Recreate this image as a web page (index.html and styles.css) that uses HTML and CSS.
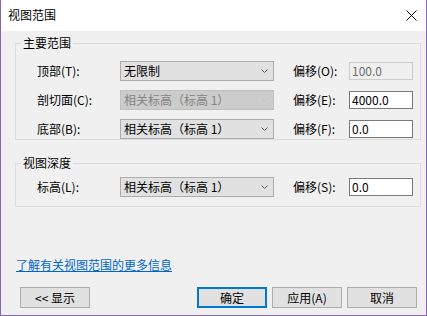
FILE: index.html
```html
<!DOCTYPE html>
<html lang="zh-CN">
<head>
<meta charset="utf-8">
<title>视图范围</title>
<link rel="stylesheet" href="styles.css">
</head>
<body>
<div class="window">
  <header class="titlebar">
    <span class="title">视图范围</span>
    <svg class="close" width="11" height="11" viewBox="0 0 11 11"><path d="M0.5 0.5 L10.5 10.5 M10.5 0.5 L0.5 10.5" stroke="#000" stroke-width="1" fill="none"/></svg>
  </header>
  <main class="content">
    <fieldset class="group group-main">
      <legend>主要范围</legend>
      <div class="rows">
        <span class="label">顶部(T):</span>
        <div class="combo"><span>无限制</span><svg class="arrow" width="7" height="4" viewBox="0 0 7 4"><polyline points="0.5,0.5 3.5,3.5 6.5,0.5" fill="none" stroke="#606060" stroke-width="1"/></svg></div>
        <span class="label offset">偏移(O):</span>
        <div class="field disabled">100.0</div>

        <span class="label">剖切面(C):</span>
        <div class="combo disabled"><span>相关标高（标高 1）</span><svg class="arrow" width="7" height="4" viewBox="0 0 7 4"><polyline points="0.5,0.5 3.5,3.5 6.5,0.5" fill="none" stroke="#bfbfbf" stroke-width="1"/></svg></div>
        <span class="label offset">偏移(E):</span>
        <div class="field">4000.0</div>

        <span class="label">底部(B):</span>
        <div class="combo"><span>相关标高（标高 1）</span><svg class="arrow" width="7" height="4" viewBox="0 0 7 4"><polyline points="0.5,0.5 3.5,3.5 6.5,0.5" fill="none" stroke="#606060" stroke-width="1"/></svg></div>
        <span class="label offset">偏移(F):</span>
        <div class="field">0.0</div>
      </div>
    </fieldset>

    <fieldset class="group group-depth">
      <legend>视图深度</legend>
      <div class="rows">
        <span class="label">标高(L):</span>
        <div class="combo"><span>相关标高（标高 1）</span><svg class="arrow" width="7" height="4" viewBox="0 0 7 4"><polyline points="0.5,0.5 3.5,3.5 6.5,0.5" fill="none" stroke="#606060" stroke-width="1"/></svg></div>
        <span class="label offset">偏移(S):</span>
        <div class="field">0.0</div>
      </div>
    </fieldset>

    <a class="more" href="#">了解有关视图范围的更多信息</a>

    <div class="buttons">
      <button class="btn btn-show">&lt;&lt; 显示</button>
      <button class="btn btn-default">确定</button>
      <button class="btn">应用(A)</button>
      <button class="btn">取消</button>
    </div>
  </main>
</div>
</body>
</html>
```

FILE: styles.css
```css
html, body {
  margin: 0;
  padding: 0;
}

body {
  width: 427px;
  height: 316px;
  overflow: hidden;
  font-family: "Noto Sans CJK SC", "Noto Sans", sans-serif;
  font-size: 12px;
  color: #000;
  background: #f0f0f0;
}

.window {
  box-sizing: border-box;
  width: 427px;
  height: 316px;
  border: 1px solid #8764b8;
  border-top: none;
  background: #f0f0f0;
  display: flex;
  flex-direction: column;
}

.titlebar {
  box-sizing: border-box;
  height: 31px;
  background: #fff;
  display: flex;
  align-items: center;
  justify-content: space-between;
  padding: 0 9px 0 7px;
  flex: none;
}

.title {
  font-size: 12px;
  line-height: 16px;
  margin-top: -1px;
}

.close {
  display: block;
}

.content {
  display: flex;
  flex-direction: column;
  flex: 1;
}

.group {
  box-sizing: border-box;
  width: 406px;
  min-width: 0;
  margin: 4px 0 0 14px;
  border: 1px solid #dcdcdc;
  padding: 10px 0 0 21px;
}

.group legend {
  margin-left: -16px;
  padding: 0 2px;
  line-height: 16px;
  font-size: 12px;
}

.group-depth {
  margin-top: 15px;
  padding-top: 6px;
  padding-bottom: 9px;
}

.rows {
  display: grid;
  grid-template-columns: 83px 154px 75px 64px;
  grid-auto-rows: 20px;
  row-gap: 9px;
  align-items: center;
}

.label {
  line-height: 16px;
  white-space: nowrap;
}

.offset {
  padding-left: 19px;
}

.combo {
  box-sizing: border-box;
  height: 20px;
  border: 1px solid #adadad;
  background: #e1e1e1;
  display: flex;
  align-items: center;
  justify-content: space-between;
  padding: 0 5px 0 3px;
  white-space: nowrap;
  line-height: 16px;
}

.combo.disabled {
  background: #cccccc;
  border-color: #bfbfbf;
  color: #838383;
}

.arrow {
  display: block;
  flex: none;
}

.field {
  box-sizing: border-box;
  height: 18px;
  border: 1px solid #7a7a7a;
  background: #fff;
  padding-left: 2px;
  line-height: 16px;
}

.field.disabled {
  border-color: #cccccc;
  background: #f0f0f0;
  color: #6d6d6d;
}

.more {
  align-self: flex-start;
  margin: 50px 0 0 15px;
  line-height: 16px;
  color: #0066cc;
  text-decoration: underline;
}

.buttons {
  display: flex;
  gap: 5px;
  margin-top: 14px;
  padding: 0 9px 0 19px;
}

.btn {
  box-sizing: border-box;
  width: 70px;
  height: 21px;
  padding: 0;
  margin: 0;
  border: 1px solid #adadad;
  background: #e1e1e1;
  font-family: "Noto Sans CJK SC", "Noto Sans", sans-serif;
  font-size: 12px;
  line-height: 16px;
  color: #000;
}

.btn-show {
  margin-right: auto;
}

.btn-default {
  border: 2px solid #0078d7;
}
```
